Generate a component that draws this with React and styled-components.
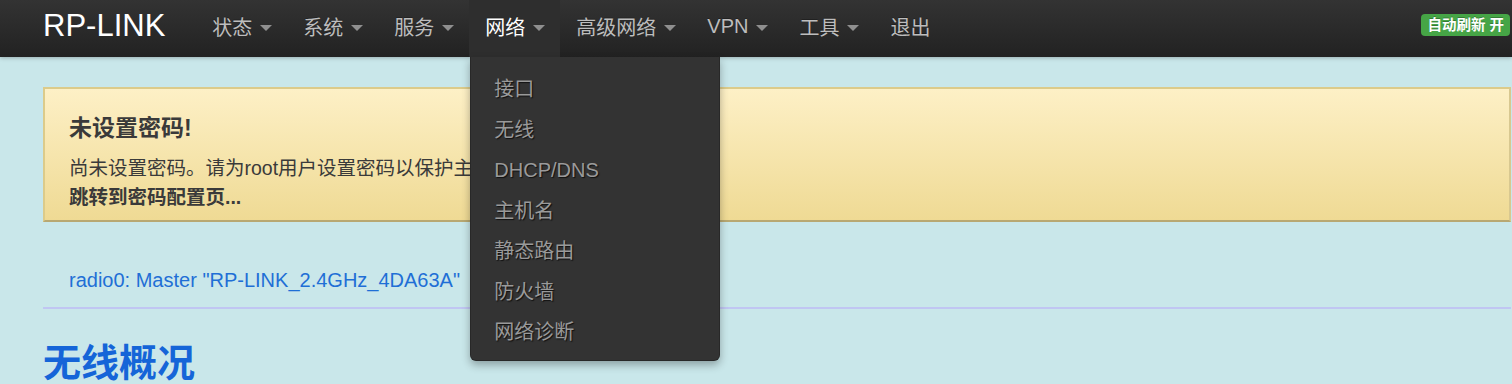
import React from "react";
import styled, { createGlobalStyle } from "styled-components";

const Global = createGlobalStyle`
  html, body { margin: 0; padding: 0; }
  body {
    background: #c9e7ea;
    font-family: "Liberation Sans", Arial, "Noto Sans CJK SC", sans-serif;
    overflow: hidden;
  }
`;

const Navbar = styled.header`
  position: relative;
  z-index: 10;
  height: 57px;
  display: flex;
  align-items: center;
  padding: 0 2px 0 43px;
  background: linear-gradient(to bottom, #333333, #222222);
  box-shadow: 0 1px 4px rgba(0, 0, 0, 0.25);
`;

const Brand = styled.a`
  color: #ffffff;
  font-size: 31px;
  line-height: 36px;
  margin-top: -5px;
  margin-right: 31px;
  text-decoration: none;
`;

const NavList = styled.ul`
  display: flex;
  margin: 0;
  padding: 0;
  list-style: none;
  height: 57px;
`;

const NavItem = styled.li`
  position: relative;
  display: flex;
  align-items: center;
  gap: 8px;
  height: 57px;
  box-sizing: border-box;
  padding: 0 15px 4px 16px;
  font-size: 20px;
  color: ${(p) => (p.$active ? "#ffffff" : "#bdbdbd")};
  background: ${(p) => (p.$active ? "#2e2e2e" : "transparent")};
  text-shadow: 0 -1px 0 rgba(0, 0, 0, 0.25);
`;

const Caret = styled.span`
  width: 0;
  height: 0;
  border-left: 6px solid transparent;
  border-right: 6px solid transparent;
  border-top: 6px solid #8f8f8f;
  margin-top: 2px;
`;

const Dropdown = styled.ul`
  position: absolute;
  top: 57px;
  left: 1px;
  width: 250px;
  box-sizing: border-box;
  margin: 0;
  padding: 12px 0 7px;
  list-style: none;
  background: #333333;
  border: 1px solid rgba(0, 0, 0, 0.2);
  border-top: none;
  border-radius: 0 0 6px 6px;
  box-shadow: 0 4px 8px rgba(0, 0, 0, 0.3);
`;

const DropItem = styled.li`
  height: 40.5px;
  line-height: 40.5px;
  padding-left: 23px;
  font-size: 20px;
  color: #9a9a9a;
  text-shadow: 1px 1px 1px #111;
  white-space: nowrap;
`;

const Badge = styled.span`
  margin-left: auto;
  align-self: flex-start;
  margin-top: 14px;
  height: 22px;
  line-height: 22px;
  padding: 0 6px;
  border-radius: 4px;
  background: #46a546;
  color: #ffffff;
  font-size: 14.5px;
  font-weight: bold;
  text-shadow: 0 -1px 0 rgba(0, 0, 0, 0.25);
  white-space: nowrap;
`;

const Main = styled.main`
  padding: 30px 1px 0 43px;
`;

const Alert = styled.div`
  padding: 24px 24px 8px;
  border: 2px solid #dccb8a;
  border-bottom-color: #b8a872;
  border-right-color: #d8c890;
  background: linear-gradient(to bottom, #fdf0c6, #efda94);
  color: #3a3a3a;
`;

const AlertTitle = styled.h4`
  margin: 0 0 11px;
  font-size: 23px;
  line-height: 30px;
  font-weight: bold;
  color: #3a3a3a;
`;

const AlertText = styled.p`
  margin: 0;
  font-size: 19.5px;
  line-height: 29px;
  font-weight: ${(p) => (p.$bold ? "bold" : "normal")};
  white-space: nowrap;
`;

const RadioRow = styled.div`
  margin-top: 46px;
  padding: 0 26px 15px;
  border-bottom: 2px solid #c0c6f2;
  font-size: 20px;
  line-height: 24px;
  color: #1f6fd6;
`;

const Heading = styled.h2`
  margin: 32px 0 0;
  font-size: 38px;
  line-height: 44px;
  font-weight: bold;
  color: #1565d8;
`;

const navItems = ["状态", "系统", "服务", "网络", "高级网络", "VPN", "工具"];
const dropItems = ["接口", "无线", "DHCP/DNS", "主机名", "静态路由", "防火墙", "网络诊断"];

export default function App() {
  return (
    <>
      <Global />
      <Navbar>
        <Brand>RP-LINK</Brand>
        <NavList>
          {navItems.map((n) => (
            <NavItem key={n} $active={n === "网络"}>
              {n}
              <Caret />
              {n === "网络" && (
                <Dropdown>
                  {dropItems.map((d) => (
                    <DropItem key={d}>{d}</DropItem>
                  ))}
                </Dropdown>
              )}
            </NavItem>
          ))}
          <NavItem>退出</NavItem>
        </NavList>
        <Badge>自动刷新 开</Badge>
      </Navbar>
      <Main>
        <Alert>
          <AlertTitle>未设置密码!</AlertTitle>
          <AlertText>尚未设置密码。请为root用户设置密码以保护主机并开启SSH。</AlertText>
          <AlertText $bold>跳转到密码配置页...</AlertText>
        </Alert>
        <RadioRow>radio0: Master "RP-LINK_2.4GHz_4DA63A"</RadioRow>
        <Heading>无线概况</Heading>
      </Main>
    </>
  );
}
